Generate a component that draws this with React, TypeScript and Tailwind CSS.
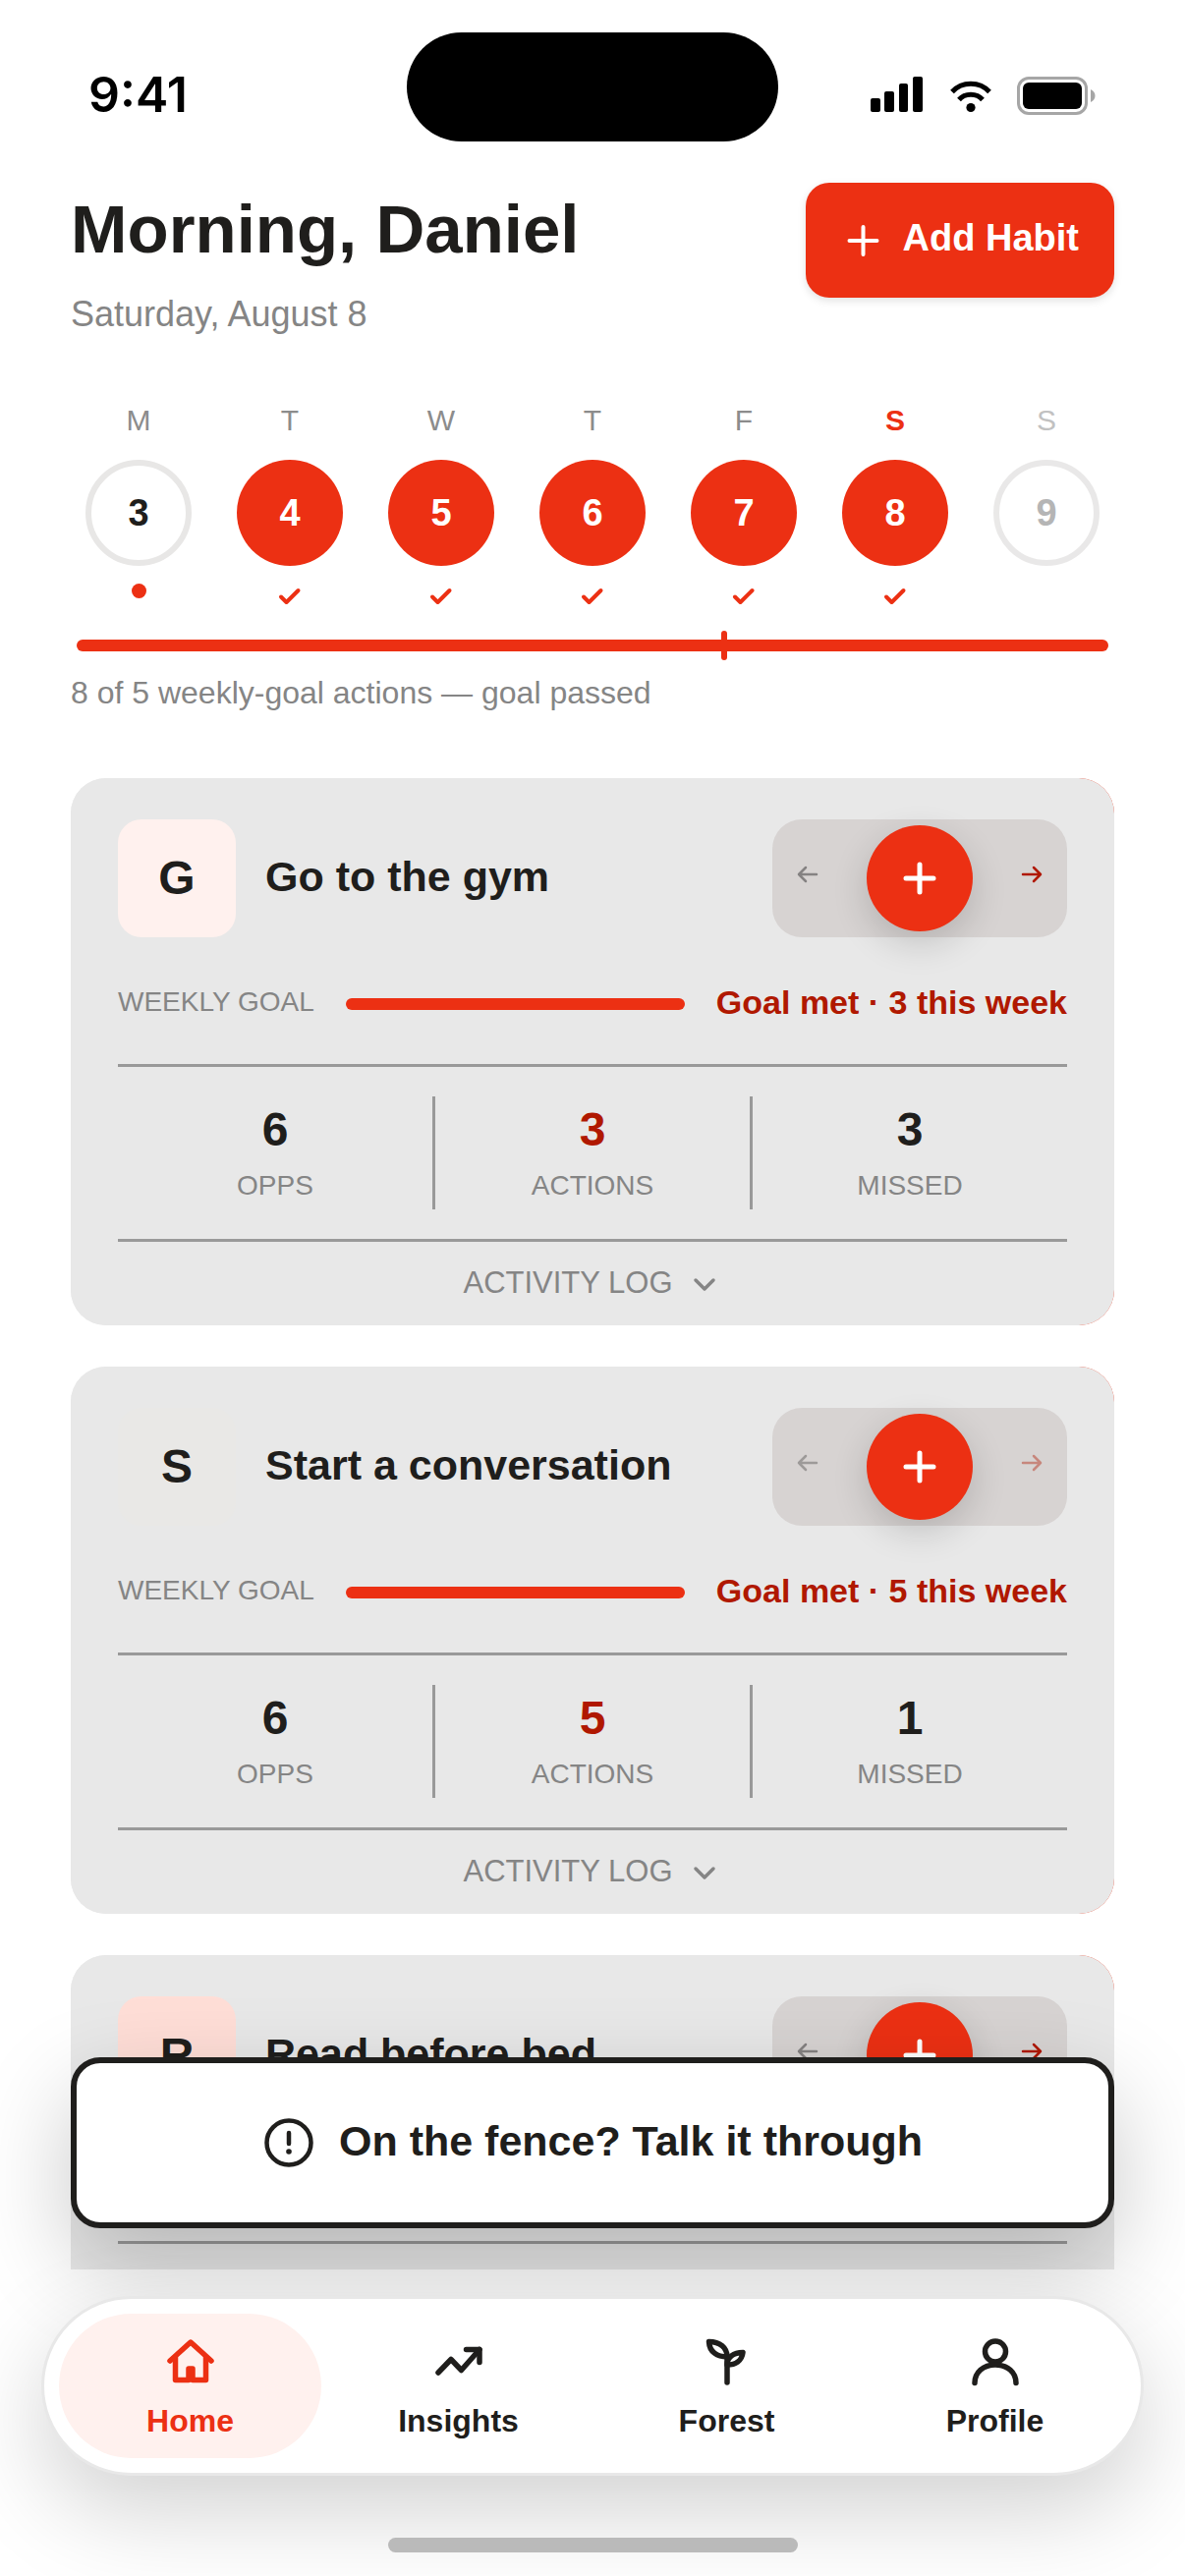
import React from "react";

type Day = { letter: string; date: number; state: "missed" | "done" | "future"; today?: boolean };

const days: Day[] = [
  { letter: "M", date: 3, state: "missed" },
  { letter: "T", date: 4, state: "done" },
  { letter: "W", date: 5, state: "done" },
  { letter: "T", date: 6, state: "done" },
  { letter: "F", date: 7, state: "done" },
  { letter: "S", date: 8, state: "done", today: true },
  { letter: "S", date: 9, state: "future" },
];

type Habit = {
  name: string;
  tile: string;
  opps: number;
  actions: number;
  missed: number;
  faded?: boolean;
};

const habits: Habit[] = [
  { name: "Go to the gym", tile: "bg-[#fff1ee]", opps: 6, actions: 3, missed: 3 },
  { name: "Start a conversation", tile: "bg-[#e9e8e6]", opps: 6, actions: 5, missed: 1, faded: true },
  { name: "Read before bed", tile: "bg-[#ffded7]", opps: 6, actions: 4, missed: 2 },
];

function StatusBar() {
  return (
    <div className="flex h-[186px] shrink-0 items-start justify-between px-[90px]">
      <div className="mt-[66px] flex-1 font-['Inter',sans-serif] text-[50px] leading-[60px] font-semibold text-black">
        9:41
      </div>
      <div className="mt-[33px] h-[111px] w-[378px] rounded-full bg-black" />
      <div className="mt-[78px] flex flex-1 justify-end gap-6">
        <svg className="h-10 w-[57px]" viewBox="0 0 57 40" role="img" aria-label="Signal">
          <rect x="2" y="22" width="10" height="14" rx="2" />
          <rect x="16" y="15" width="10" height="21" rx="2" />
          <rect x="31" y="7" width="9" height="29" rx="2" />
          <rect x="45" y="0" width="10" height="36" rx="2" />
        </svg>
        <svg className="h-10 w-[46px]" viewBox="0 0 46 40" fill="none" role="img" aria-label="Wi-Fi">
          <path d="M4 15.500C14 4.500 32 4.500 42 15.500" stroke="black" strokeWidth="5" />
          <path d="M11 23.500C17 16.500 29 16.500 35 23.500" stroke="black" strokeWidth="5" />
          <circle cx="23" cy="31.500" r="4.600" fill="black" />
        </svg>
        <svg className="h-10 w-[81px]" viewBox="0 0 81 40" fill="none" role="img" aria-label="Battery">
          <rect x="1.500" y="1.500" width="69" height="36" rx="10.500" stroke="#a6a6a6" strokeWidth="3" />
          <rect x="6" y="6" width="60" height="27" rx="6" fill="black" />
          <path d="M75 13C81 15.500 81 23.500 75 26Z" fill="#a6a6a6" />
        </svg>
      </div>
    </div>
  );
}

function Week() {
  return (
    <section className="mt-[66px]">
      <div className="grid grid-cols-7 gap-4">
        {days.map((d) => (
          <div key={d.date} className={"flex flex-col items-center " + (d.state === "future" ? "opacity-60" : "")}>
            <div
              className={
                "text-[30px] leading-9 " + (d.today ? "font-bold text-[#ec3013]" : d.state === "future" ? "text-[#999999]" : "text-[#8c8c8c]")
              }
            >
              {d.letter}
            </div>
            <div
              className={
                "mt-[22px] flex size-[108px] items-center justify-center rounded-full text-[38px] font-bold " +
                (d.state === "done"
                  ? "bg-[#ec3013] text-white"
                  : d.state === "missed"
                    ? "border-6 border-[#e8e7e6] text-[#1f1e1c]"
                    : "border-6 border-[#dcdad9] text-[#858585]")
              }
            >
              {d.date}
            </div>
            <div className="mt-[18px] flex h-[27px] justify-center">
              {d.state === "missed" && <span className="size-[15px] rounded-full bg-[#ec3013]" />}
              {d.state === "done" && (
                <svg className="h-[27px] w-[30px]" viewBox="0 0 30 27" fill="none" stroke="#ec3013" strokeWidth="4" strokeLinecap="round" strokeLinejoin="round">
                  <path d="M6 13.500L11.500 19L23.500 7" />
                </svg>
              )}
            </div>
          </div>
        ))}
      </div>
      <div className="mt-[30px] px-1.5">
        <div className="relative h-3 rounded-full bg-[#ec3013]">
          <span className="absolute -top-[9px] left-[62.500%] h-[30px] w-1.5 rounded-full bg-[#ec3013]" />
        </div>
      </div>
      <p className="mt-5 text-[32px] leading-[44px] text-[#858585]">8 of 5 weekly-goal actions — goal passed</p>
    </section>
  );
}

function Stat({ value, label, accent }: { value: number; label: string; accent?: boolean }) {
  return (
    <div className="flex flex-1 flex-col items-center pt-1.5 pb-[7px]">
      <div className={"text-[48px] leading-[56px] font-bold " + (accent ? "text-[#b01800]" : "text-[#1f1e1c]")}>{value}</div>
      <div className="mt-3 text-[28px] leading-[34px] text-[#858585]">{label}</div>
    </div>
  );
}

function HabitCard({ habit }: { habit: Habit }) {
  return (
    <div className="rounded-[36px] bg-[linear-gradient(to_right,#e8e8e8_50%,#ec3013_50%)]">
      <article className="rounded-[36px] bg-[#e8e8e8] px-12 pt-[42px]">
        <div className="flex items-center">
          <div className={"flex size-[120px] items-center justify-center rounded-3xl text-[48px] font-bold " + habit.tile}>
            {habit.name[0]}
          </div>
          <h2 className="ml-[30px] flex-1 pb-1 text-[43px] leading-[54px] font-bold">{habit.name}</h2>
          <div className="flex h-[120px] w-[300px] items-center justify-between rounded-[30px] bg-[#d7d3d2] px-[23px]">
            <svg
              className={"mb-2 h-6 w-[26px] " + (habit.faded ? "opacity-70" : "")}
              viewBox="0 0 26 24"
              fill="none"
              stroke="#858282"
              strokeWidth="2.500"
              strokeLinecap="round"
              strokeLinejoin="round"
            >
              <path d="M22 12H4M11 5L4 12L11 19" />
            </svg>
            <button
              type="button"
              aria-label={"Log " + habit.name}
              className="flex size-[108px] items-center justify-center rounded-full bg-[#ec3013] shadow-[0_12px_36px_rgba(0,0,0,0.16)]"
            >
              <svg className="size-10" viewBox="0 0 40 40" stroke="white" strokeWidth="5" strokeLinecap="round">
                <path d="M20 6V34M6 20H34" />
              </svg>
            </button>
            <svg
              className={"mb-2 h-6 w-[26px] " + (habit.faded ? "opacity-40" : "")}
              viewBox="0 0 26 24"
              fill="none"
              stroke="#b01800"
              strokeWidth="2.500"
              strokeLinecap="round"
              strokeLinejoin="round"
            >
              <path d="M4 12H22M15 5L22 12L15 19" />
            </svg>
          </div>
        </div>
        <div className="mt-11 flex h-11 items-center">
          <span className="text-[28px] whitespace-nowrap text-[#858585]">WEEKLY GOAL</span>
          <span className="mt-1 mr-8 ml-8 h-3 flex-1 rounded-full bg-[#ec3013]" />
          <span className="text-[34px] font-bold whitespace-nowrap text-[#b01800]">
            Goal met · {habit.actions} this week
          </span>
        </div>
        <div className="mt-[41px] flex divide-x-3 divide-[#999999] border-y-3 border-[#999999] py-[30px]">
          <Stat value={habit.opps} label="OPPS" />
          <Stat value={habit.actions} label="ACTIONS" accent />
          <Stat value={habit.missed} label="MISSED" />
        </div>
        <button type="button" className="flex h-[85px] w-full items-center justify-center gap-3.5 text-[31px] text-[#858585]">
          ACTIVITY LOG
          <svg className="size-9" viewBox="0 0 36 36" fill="none" stroke="#858585" strokeWidth="3.500" strokeLinecap="round" strokeLinejoin="round">
            <path d="M9 14L18 23L27 14" />
          </svg>
        </button>
      </article>
    </div>
  );
}

function TabIcon({ children }: { children: React.ReactNode }) {
  return (
    <svg className="size-[60px]" viewBox="0 0 60 60" fill="none" stroke="currentColor" strokeWidth="5.500" strokeLinecap="round" strokeLinejoin="round">
      {children}
    </svg>
  );
}

const tabs = [
  {
    label: "Home",
    active: true,
    icon: (
      <>
        <path d="M9 29L30 10L51 29" />
        <path d="M14.500 26V48.500H28V37H32V48.500H45.500V26" />
      </>
    ),
  },
  {
    label: "Insights",
    icon: (
      <>
        <path d="M9 41L22 27.500L32.500 38.500L51 17.500" />
        <path d="M37.500 17.500H51V30.500" />
      </>
    ),
  },
  {
    label: "Forest",
    icon: (
      <>
        <path d="M30 51V24.500" />
        <path d="M11.500 9.500C22.500 9.500 30 15.500 30 25C20 25 12 20 11.500 9.500Z" />
        <path d="M46 20.500C36.500 20.500 30 25.500 30 33C38.500 33 45 29 46 20.500Z" />
      </>
    ),
  },
  {
    label: "Profile",
    icon: (
      <>
        <circle cx="30" cy="19.500" r="10.500" />
        <path d="M9 51.500C9 41 17.500 33 30 33S51 41 51 51.500" />
      </>
    ),
  },
];

export default function App() {
  return (
    <div className="flex h-screen flex-col overflow-hidden bg-white font-['Liberation_Sans',Arial,sans-serif] text-[#1f1e1c]">
      <div className="relative flex min-h-0 flex-1 flex-col">
        <div className="min-h-0 flex-1 overflow-hidden">
          <StatusBar />
          <main className="px-[72px]">
            <header className="flex items-start justify-between">
              <div className="pt-2.5">
                <h1 className="text-[69px] leading-[76px] font-bold">Morning, Daniel</h1>
                <p className="mt-6 text-[36px] leading-[48px] text-[#858585]">Saturday, August 8</p>
              </div>
              <button
                type="button"
                className="flex h-[117px] items-center gap-[18px] rounded-3xl bg-[#ec3013] px-9 text-[38px] font-bold text-white shadow-[0_3px_9px_rgba(0,0,0,0.12)]"
              >
                <svg className="size-[45px]" viewBox="0 0 45 45" stroke="white" strokeWidth="4" strokeLinecap="round">
                  <path d="M22.500 9V37M8.500 23H36.500" />
                </svg>
                <span className="pb-1">Add Habit</span>
              </button>
            </header>
            <Week />
            <div className="mt-[65px] flex flex-col gap-[42px]">
              {habits.map((h) => (
                <HabitCard key={h.name} habit={h} />
              ))}
            </div>
          </main>
        </div>
        <button
          type="button"
          className="absolute inset-x-[72px] bottom-[42px] flex h-[174px] items-center justify-center gap-6 rounded-[30px] border-6 border-[#1f1e1c] bg-white text-[43px] font-bold shadow-[0_36px_96px_rgba(0,0,0,0.22)]"
        >
          <svg className="size-[54px]" viewBox="0 0 54 54" fill="none" stroke="currentColor" strokeWidth="4.500" strokeLinecap="round">
            <circle cx="27" cy="27" r="22.500" />
            <path d="M27 17V28" />
            <circle cx="27" cy="36" r="2.800" fill="currentColor" stroke="none" />
          </svg>
          <span className="pb-1">On the fence? Talk it through</span>
        </button>
      </div>
      <footer className="relative shrink-0 px-[42px] pt-[27px] pb-6">
        <nav className="grid grid-cols-4 gap-1.5 rounded-full border-3 border-[#e8e8e8] bg-white p-[15px] shadow-[0_36px_96px_rgba(0,0,0,0.18)]">
          {tabs.map((t) => (
            <a
              key={t.label}
              href="#"
              aria-current={t.active ? "page" : undefined}
              className={
                "flex h-[147px] flex-col items-center gap-3 rounded-full pt-[19px] text-[32px] leading-9 font-bold " +
                (t.active ? "bg-[#fff1ee] text-[#ec3013]" : "text-[#1f1e1c]")
              }
            >
              <TabIcon>{t.icon}</TabIcon>
              {t.label}
            </a>
          ))}
        </nav>
        <div className="relative mx-auto mt-[63px] h-[15px] w-[417px] rounded-full bg-[#bababa]" />
      </footer>
    </div>
  );
}
